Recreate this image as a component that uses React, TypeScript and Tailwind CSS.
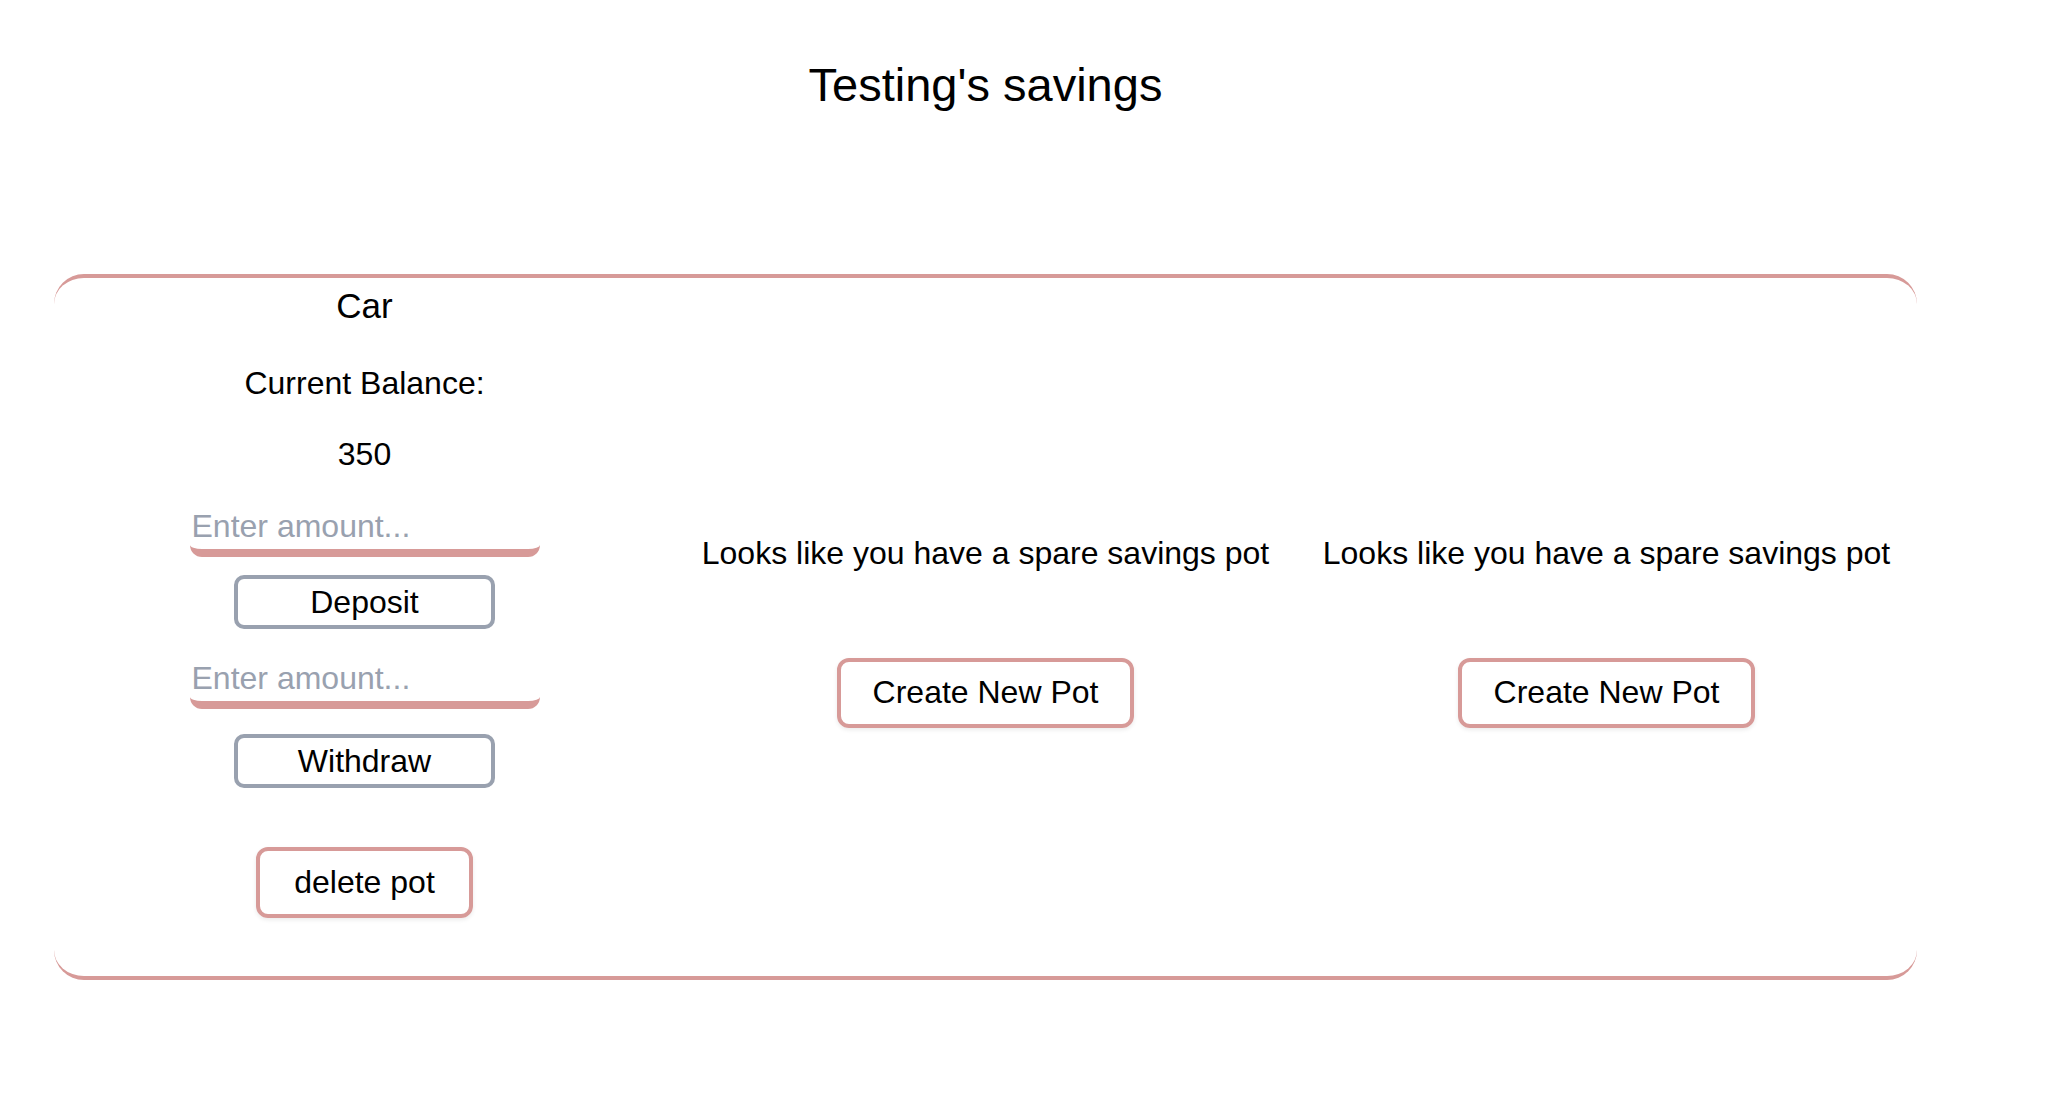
import { useState } from "react";

const pink = "border-[#d79a98]";

const SparePot = () => {
  return (
    <div className="flex flex-col items-center justify-center pt-[8px]">
      <p className="text-[32px] leading-[37px]">Looks like you have a spare savings pot</p>
      <button
        className={`mt-[86px] h-[70px] px-8 border-4 ${pink} rounded-xl text-[32px] leading-[37px] shadow-[0_2px_4px_rgba(0,0,0,0.08)]`}
      >
        Create New Pot
      </button>
    </div>
  );
};

const App = () => {
  const [deposit, setDeposit] = useState("");
  const [withdraw, setWithdraw] = useState("");

  const inputClass =
    "w-[350px] h-[49px] px-0.5 pb-1 border-b-8 border-[#d79a98] rounded-xl bg-transparent text-[32px] leading-[37px] outline-none placeholder:text-gray-400";
  const greyButton =
    "w-[261px] h-[54px] border-4 border-gray-400 rounded-[10px] text-[32px] leading-[37px]";

  return (
    <main
      className="min-h-screen bg-white text-black"
      style={{ fontFamily: '"Liberation Sans", Arial, sans-serif' }}
    >
      <div className="ml-[54px] w-[1863px]">
        <h1 className="pt-[57px] text-center text-[47px] leading-[55px]">Testing's savings</h1>

        <div className={`mt-[162px] h-[706px] grid grid-cols-3 border-y-4 ${pink} rounded-[30px]`}>
          {/* pot in use */}
          <div className="flex flex-col items-center pt-2">
            <h2 className="text-[35px] leading-[40px]">Car</h2>
            <p className="mt-[39px] text-[32px] leading-[37px]">Current Balance:</p>
            <p className="mt-[34px] text-[32px] leading-[37px]">350</p>
            <input
              className={`mt-[35px] ${inputClass}`}
              placeholder="Enter amount..."
              value={deposit}
              onChange={(e) => setDeposit(e.target.value)}
            />
            <button className={`mt-[18px] ${greyButton}`}>Deposit</button>
            <input
              className={`mt-[31px] ${inputClass}`}
              placeholder="Enter amount..."
              value={withdraw}
              onChange={(e) => setWithdraw(e.target.value)}
            />
            <button className={`mt-[25px] ${greyButton}`}>Withdraw</button>
            <button
              className={`mt-[59px] h-[71px] px-[34px] border-4 ${pink} rounded-xl text-[32px] leading-[37px] shadow-[0_2px_4px_rgba(0,0,0,0.08)]`}
            >
              delete pot
            </button>
          </div>

          <SparePot />
          <SparePot />
        </div>
      </div>
    </main>
  );
};

export default App;
